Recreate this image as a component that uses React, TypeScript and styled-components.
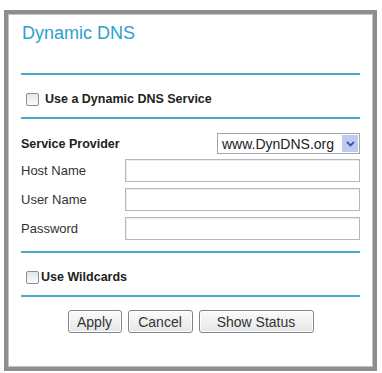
import React from "react";
import styled, { createGlobalStyle } from "styled-components";

const Global = createGlobalStyle`
  html, body { margin: 0; padding: 0; background: #ffffff; }
  body { font-family: "Liberation Sans", Arial, sans-serif; }
  * { box-sizing: border-box; }
`;

const Frame = styled.div`
  margin: 10px 0 0 4px;
  width: 373px;
  height: 361px;
  border: 4px solid #8e8e8e;
  box-shadow: inset 1px 1px 0 #c4c4c4, inset -1px -1px 0 #c4c4c4;
  background: #fff;
  padding: 9px 13px 0 13px;
  display: flex;
  flex-direction: column;
`;

const Title = styled.div`
  font-size: 18px;
  line-height: 20px;
  color: #2e9fcf;
  padding-left: 1px;
`;

const Divider = styled.div<{ $mt: number }>`
  margin-top: ${(p) => p.$mt}px;
  height: 2px;
  background: #46abcc;
`;

const CheckRow = styled.label<{ $mt: number; $gap: number }>`
  margin-top: ${(p) => p.$mt}px;
  display: flex;
  align-items: center;
  gap: ${(p) => p.$gap}px;
  padding-left: 5px;
  height: 16px;
  font-size: 12.5px;
  font-weight: bold;
  color: #222;
`;

const Box = styled.span`
  width: 13px;
  height: 13px;
  border: 1px solid #8a8f96;
  border-radius: 2px;
  background: linear-gradient(#e4e6ea, #fbfbfb);
`;

const ProviderRow = styled.div`
  margin-top: 14px;
  display: flex;
  align-items: center;
  justify-content: space-between;
  height: 21px;
`;

const BoldLabel = styled.span`
  font-size: 12.5px;
  font-weight: bold;
  color: #222;
`;

const Select = styled.div`
  width: 143px;
  height: 21px;
  border: 1px solid #a3a6ad;
  display: flex;
  align-items: center;
  justify-content: space-between;
  padding: 0 1px 0 4px;
  font-size: 14px;
  color: #222;
  background: #fff;
`;

const DropBtn = styled.span`
  width: 16px;
  height: 17px;
  background: #bfcbee;
  display: flex;
  align-items: center;
  justify-content: center;
`;

const FieldRow = styled.div<{ $mt: number }>`
  margin-top: ${(p) => p.$mt}px;
  display: grid;
  grid-template-columns: 104px 1fr;
  align-items: center;
  height: 23px;
`;

const Label = styled.span`
  font-size: 13px;
  color: #333;
`;

const TextBox = styled.div`
  height: 23px;
  border: 1px solid #b4b7bc;
  box-shadow: inset 1px 1px 0 #ececec;
  background: #fff;
`;

const ButtonRow = styled.div`
  margin-top: 13px;
  display: flex;
  justify-content: center;
  gap: 6px;
`;

const Button = styled.button<{ $w: number }>`
  width: ${(p) => p.$w}px;
  height: 23px;
  border: 1px solid #7c8690;
  border-radius: 3px;
  background: linear-gradient(#fbfbfb, #e6e6e6);
  box-shadow: inset 0 0 0 1px #ffffff;
  font-family: "Liberation Sans", Arial, sans-serif;
  font-size: 14px;
  color: #333;
  padding: 0;
`;

export default function App() {
  return (
    <>
      <Global />
      <Frame>
        <Title>Dynamic DNS</Title>
        <Divider $mt={30} />
        <CheckRow $mt={16} $gap={6}>
          <Box />
          Use a Dynamic DNS Service
        </CheckRow>
        <Divider $mt={10} />
        <ProviderRow>
          <BoldLabel>Service Provider</BoldLabel>
          <Select>
            www.DynDNS.org
            <DropBtn>
              <svg width="9" height="6" viewBox="0 0 9 6">
                <path d="M1 1 L4.5 4.5 L8 1" stroke="#3d55a5" strokeWidth="1.8" fill="none" />
              </svg>
            </DropBtn>
          </Select>
        </ProviderRow>
        <FieldRow $mt={5}>
          <Label>Host Name</Label>
          <TextBox />
        </FieldRow>
        <FieldRow $mt={6}>
          <Label>User Name</Label>
          <TextBox />
        </FieldRow>
        <FieldRow $mt={6}>
          <Label>Password</Label>
          <TextBox />
        </FieldRow>
        <Divider $mt={11} />
        <CheckRow $mt={16} $gap={2}>
          <Box />
          Use Wildcards
        </CheckRow>
        <Divider $mt={10} />
        <ButtonRow>
          <Button $w={54}>Apply</Button>
          <Button $w={65}>Cancel</Button>
          <Button $w={115}>Show Status</Button>
        </ButtonRow>
      </Frame>
    </>
  );
}
